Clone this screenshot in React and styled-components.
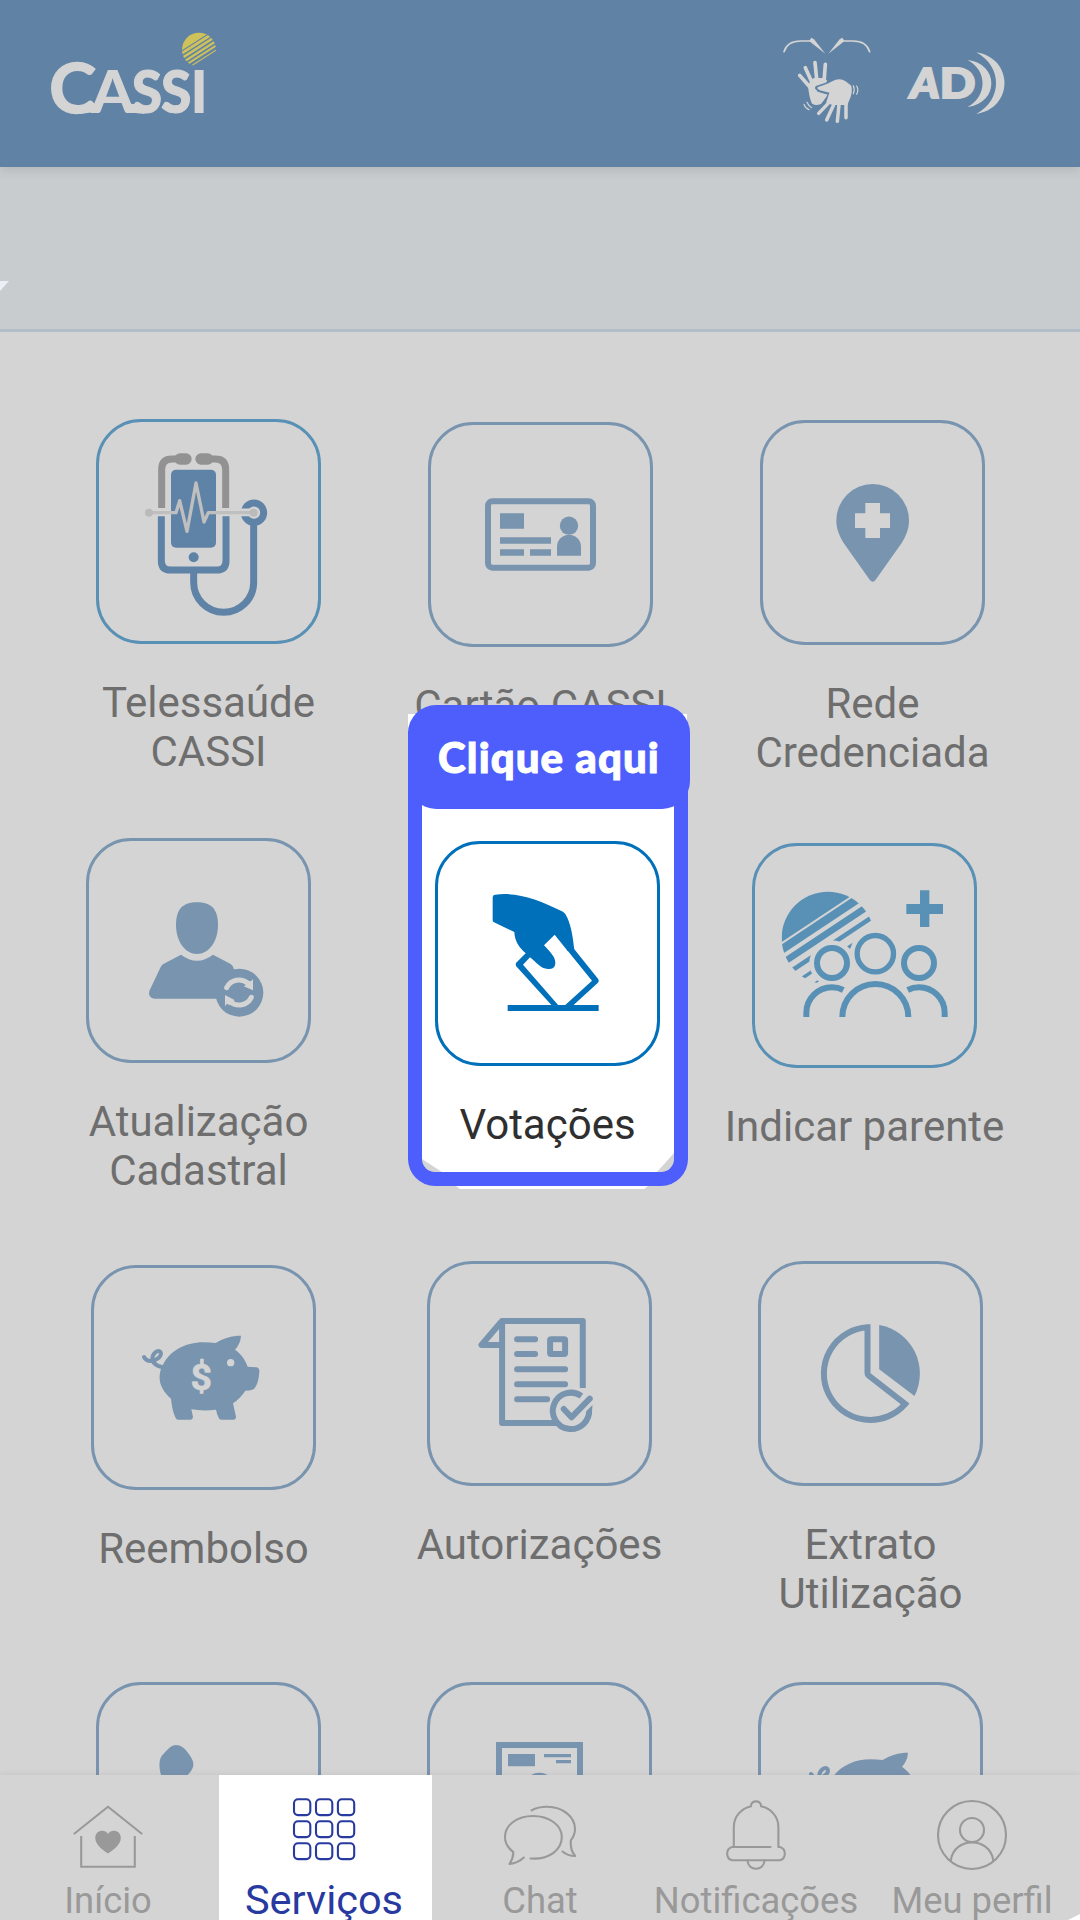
import React from "react";
import styled, { createGlobalStyle } from "styled-components";

const color = {
  page: "#d4d4d4",
  header: "#6083a5",
  banner: "#c8cccf",
  line: "#b2bec8",
  steel: "#7994af",
  sky: "#5990b5",
  phone: "#5f83a7",
  brand: "#0070ba",
  spot: "#4d5efc",
  label: "#6e6e6e",
  nav: "#999999",
  navActive: "#283a9f",
};

const GlobalStyle = createGlobalStyle`
  * { box-sizing: border-box; }
  body { margin: 0; background: ${color.page}; }
  svg { display: block; overflow: visible; }
`;

const Screen = styled.div`
  width: 1080px;
  height: 1920px;
  overflow: hidden;
  display: flex;
  flex-direction: column;
  background: ${color.page};
  font-family: Roboto, "Liberation Sans", sans-serif;
`;

const Header = styled.header`
  position: relative;
  z-index: 1;
  flex: 0 0 167px;
  display: flex;
  align-items: flex-start;
  padding: 32px 73px 0 50px;
  background: ${color.header};
  box-shadow: 0 3px 10px rgba(60, 60, 60, 0.14);
`;

const Access = styled.div`
  display: flex;
  align-items: flex-start;
  gap: 31px;
  margin-left: auto;
  padding-top: 3px;
`;

const AudioMark = styled.div`
  margin-top: 15px;
`;

const Banner = styled.section`
  position: relative;
  flex: 0 0 165px;
  background: ${color.banner};
  border-bottom: 3px solid ${color.line};
`;

const BannerNotch = styled.span`
  position: absolute;
  left: 0;
  top: 114px;
  width: 9px;
  height: 10px;
  background: #eaf0f5;
  clip-path: polygon(0 0, 100% 0, 0 100%);
`;

const Services = styled.main`
  flex: 1 1 0;
  min-height: 0;
  overflow: hidden;
  display: grid;
  grid-template-columns: repeat(3, 331px);
  grid-template-rows: 419px 423px 421px 300px;
  column-gap: 1px;
  padding: 87px 0 0 43px;
`;

const Service = styled.div`
  position: relative;
  display: flex;
  flex-direction: column;
  align-items: center;
  gap: 34px;
  margin: ${(p) => p.$dy || 0}px ${(p) => -(p.$dx || 0)}px 0 ${(p) => p.$dx || 0}px;
  z-index: ${(p) => (p.$lit ? 2 : 0)};
`;

const Tile = styled.div`
  position: relative;
  flex: none;
  width: 225px;
  height: 225px;
  border: 3px solid ${(p) => p.$stroke};
  border-radius: 45px;
`;

const Label = styled.div`
  position: relative;
  font-size: 42px;
  line-height: 49px;
  text-align: center;
  white-space: pre-line;
  color: ${(p) => (p.$lit ? "#2f2f2f" : color.label)};
`;

const SpotBack = styled.span`
  position: absolute;
  left: 26px;
  top: -127px;
  width: 279px;
  height: 475px;
  background: #fff;
  clip-path: polygon(0 0, 100% 0, 100% 425px, 266px 439px, 249px 458px, 239px 473px, 236px 475px, 52px 475px, 48px 472px, 34px 458px, 14px 445px, 0 437px);
`;

const SpotFrame = styled.span`
  position: absolute;
  left: 26px;
  top: -110px;
  width: 280px;
  height: 455px;
  border: 14px solid ${color.spot};
  border-top: 0;
  border-radius: 0 0 27px 27px;
`;

const SpotBadge = styled.span`
  position: absolute;
  left: 26px;
  top: -136px;
  width: 282px;
  height: 104px;
  border-radius: 28px;
  background: ${color.spot};
  color: #fff;
  font: 900 42px/104px Lato, "Open Sans", sans-serif;
  letter-spacing: 1.1px;
  -webkit-text-stroke: 1px #fff;
  text-align: center;
  white-space: nowrap;
`;

const NavBar = styled.nav`
  position: relative;
  flex: 0 0 145px;
  height: 145px;
  min-height: 0;
  display: grid;
  grid-template-columns: repeat(5, 216px);
  grid-template-rows: 145px;
  background: ${color.page};
  box-shadow: 0 -1px 5px rgba(90, 90, 90, 0.1);
`;

const NavItem = styled.div`
  display: flex;
  flex-direction: column;
  align-items: center;
  gap: 8px;
  padding-top: 21px;
  color: ${(p) => (p.$active ? color.navActive : color.nav)};
  background: ${(p) => (p.$active ? "linear-gradient(to right, transparent 3px, #fff 3px)" : "none")};
`;

const NavLabel = styled.span`
  font-size: ${(p) => (p.$active ? 41.5 : 36.4)}px;
  line-height: ${(p) => (p.$active ? 36 : 38)}px;
  white-space: nowrap;
`;

const NavCorner = styled.span`
  position: absolute;
  right: 0;
  bottom: 0;
  width: 12px;
  height: 6px;
  background: #fff;
  clip-path: polygon(100% 0, 100% 100%, 0 100%);
`;

/* Icons are drawn on a 3x grid; x and y are the tile's outer corner on it. */
const TileArt = ({ x, y, children, ...rest }) => (
  <svg width="219" height="219" viewBox={`${x + 9} ${y + 9} 657 657`} {...rest}>
    {children}
  </svg>
);

const TeleArt = () => (
  <TileArt x={48} y={57} fill="none">
    <g stroke="#929292" strokeWidth="21">
      <path d="M245 324V208Q245 177 276 177H300M437 324V208Q437 177 406 177H382" />
      <path d="M300 177H318M363 177H383" strokeWidth="34" strokeLinecap="round" />
    </g>
    <rect x="273" y="209" width="135" height="234" rx="15" fill={color.phone} />
    <g stroke={color.phone} strokeWidth="21">
      <path d="M244 348V482Q244 510 272 510H410Q438 510 438 482V348" />
      <path d="M341 515V547a90 90 0 0 0 180 0V370" />
      <circle cx="522" cy="338" r="29" />
    </g>
    <circle cx="341" cy="472" r="15" fill={color.phone} />
    <path d="M222 337H262M420 337H520" stroke={color.page} strokeWidth="23" />
    <path d="M207 338H288L299 302L321 394L348 249L372 366L385 338H521" stroke="#bfbfbf" strokeWidth="10" strokeLinejoin="round" />
    <circle cx="207" cy="338" r="12" fill="#bababa" />
    <circle cx="521" cy="338" r="12" fill="#bababa" />
  </TileArt>
);

const CardArt = () => (
  <TileArt x={84} y={66} fill={color.steel}>
    <rect x="264" y="304" width="315" height="199" rx="13" fill="none" stroke={color.steel} strokeWidth="18" />
    <path d="M300 340h72v46h-72zM300 412h153v19H300zM300 448h72v19h-72zM390 448h63v19h-63z" />
    <circle cx="507" cy="377" r="27.5" />
    <path d="M471 467V440a36 36 0 0 1 72 0V467z" />
  </TileArt>
);

const PinArt = () => (
  <TileArt x={120} y={60} fill={color.steel}>
    <path d="M349 361a109 109 0 0 1 218 0c0 28-10 48-22 68L467 539q-9 12-18 0L371 429c-12-20-22-40-22-68z" />
    <path d="M436 309h44v31h30v44h-30v30h-44v-30h-31v-44h31z" fill={color.page} />
  </TileArt>
);

const UpdateArt = () => (
  <TileArt x={48} y={54} fill={color.steel}>
    <path d="M381 247c42 0 63 20 63 68c0 50-28 87-63 87s-63-37-63-87c0-48 21-68 63-68z" />
    <path d="M333 404Q381 440 429 404L482 432Q490 437 492 448V536H254Q233 534 238 513L272 441Q275 435 280 432Z" />
    <circle cx="508" cy="518" r="72" />
    <g fill="none" stroke={color.page} strokeWidth="15" strokeLinecap="round">
      <path d="M470 503A41 41 0 0 1 534 490M544 532A41 41 0 0 1 480 545" />
    </g>
    <path d="M549 477V511L521 499L529 494L535 482L543 484ZM465 525V559L471 551L479 556L485 545L495 541Z" fill={color.page} />
  </TileArt>
);

const VoteArt = () => (
  <TileArt x={106} y={153} fill={color.brand}>
    <path d="M378 490L351 517Q345 523 351 530L460 650H516L594 579Q600 573 595 566L524 478Z" />
    <path d="M465 434L577 572L496 646H476L370 524L391 502L433 466Z" fill="#fff" />
    <path d="M279 321Q280 314 287 314C355 306 415 328 490 365Q497 369 503 383C516 412 520 445 524 480L504 483L465 434L433 466L391 502L378 490C355 470 345 450 344 426L283 397Q279 395 279 391Z" />
    <path d="M433 466C455 490 467 502 467 518C467 533 458 537 445 537C422 537 408 514 391 502L378 480L400 440Z" />
    <rect x="324" y="645" width="273" height="18" />
  </TileArt>
);

const Stripes = ({ cx, cy, r, cap, bands, fill, id, skew }) => (
  <g clipPath={`url(#${id})`} fill={fill}>
    <clipPath id={id}>
      <circle cx={cx} cy={cy} r={r} />
    </clipPath>
    <g transform={`translate(${cx} ${cy}) skewY(${skew})`}>
      <rect x={-r} y={-2.5 * r} width={2 * r} height={cap - cy + 2.5 * r} />
      {bands.map(([a, b]) => (
        <rect key={a} x={-r} y={a - cy} width={2 * r} height={b - a} />
      ))}
    </g>
  </g>
);

const ReferArt = () => (
  <TileArt x={126} y={69} fill={color.sky}>
    <Stripes
      id="sun-refer" cx={354} cy={354} r={139} cap={274} skew={-33.6} fill={color.sky}
      bands={[[281, 311], [326, 350], [371, 388], [417, 429], [460, 466]]}
    />
    <g fill={color.page}>
      <circle cx="366" cy="429" r="68" />
      <circle cx="496" cy="401" r="76" />
      <circle cx="366" cy="580" r="98" />
    </g>
    <g fill="none" stroke={color.sky} strokeWidth="18">
      <circle cx="366" cy="429" r="45" />
      <circle cx="627" cy="429" r="45" />
      <circle cx="496" cy="401" r="54.5" strokeWidth="16" />
      <path d="M397 591A99 99 0 0 1 595 591" />
      <path d="M289 591V578A77 77 0 0 1 366 502Q384 502 400 510M704 591V578A77 77 0 0 0 627 502Q609 502 593 510" />
    </g>
    <path d="M630 211h28v41h41v30h-41v39h-28v-39h-41v-30h41z" />
  </TileArt>
);

const PigArt = () => (
  <TileArt x={33} y={75} fill={color.steel}>
    <path d="M247 380C264 335 315 307 370 307Q390 307 407 309C428 295 455 287 483 287Q482 310 465 329C485 343 496 360 503 380L530 382Q538 384 538 394C537 420 530 445 517 449Q508 452 496 452Q482 474 459 490L468 530Q468 539 460 539H424Q418 539 416 533Q410 520 408 509Q370 514 334 508L339 530Q338 539 331 539H294Q288 539 286 532C278 515 275 495 273 476C242 448 232 420 243 386Z" />
    <path d="M192 351Q200 366 220 362Q243 354 243 340Q241 331 231 334C217 341 213 358 221 368Q230 378 246 381" fill="none" stroke={color.steel} strokeWidth="12" strokeLinecap="round" />
    <circle cx="452" cy="368" r="11" fill={color.page} />
    <text x="364" y="449" textAnchor="middle" fontSize="112" fontWeight="700" fontFamily="Roboto, sans-serif" fill={color.page} stroke={color.page} strokeWidth="2">$</text>
  </TileArt>
);

const AuthArt = () => (
  <TileArt x={80.7} y={63} fill="none" stroke={color.steel} strokeWidth="18" strokeLinejoin="round">
    <path d="M548 444V243H306V549H472M303 246L244 315H306" />
    <path d="M351 298H405M351 342H405M351 388H495M351 433H495M351 478H441" strokeLinecap="round" />
    <rect x="450" y="298" width="45" height="44" rx="3" />
    <path d="M568 496A56 56 0 0 1 567 508A54.5 54.5 0 1 1 544 468" />
    <path d="M491 507L514 532L569 476" stroke={color.page} strokeWidth="38" strokeLinecap="butt" />
    <path d="M491 507L514 532L569 476" strokeLinecap="round" />
  </TileArt>
);

const PieArt = () => (
  <TileArt x={1073.5} y={63} fill={color.steel}>
    <path d="M1402 262V400Q1402 404 1405 406L1515 492A139 139 0 1 1 1402 262Z" fill="none" stroke={color.steel} strokeWidth="18" />
    <path d="M1437 255V388L1543 468A148 148 0 0 0 1437 255Z" />
  </TileArt>
);

const PersonArt = () => (
  <TileArt x={0} y={0} fill={color.steel}>
    <path d="M197 222C214 203 226 189 240 189C258 189 271 203 285 226C297 246 294 260 275 279L250 300H205L195 279C189 258 188 236 197 222Z" />
  </TileArt>
);

const CertificateArt = () => (
  <TileArt x={0} y={0} fill={color.steel}>
    <path d="M216 340V189H459V340" fill="none" stroke={color.steel} strokeWidth="18" />
    <path d="M243 216h81v37h-81zM351 216h81v10h-81zM387 234h45v10h-45z" />
    <circle cx="337" cy="318" r="46" />
  </TileArt>
);

const CassiLogo = () => (
  <svg width="168" height="84" viewBox="150 96 504 252" fill={color.page} fontFamily="Lato, sans-serif" fontWeight="900">
    <text x="147" y="339" fontSize="208" fontWeight="700" stroke={color.page} strokeWidth="4" textLength="142" lengthAdjust="spacingAndGlyphs">C</text>
    <path d="M232 319Q256 319 276 312L298 331Q270 341 232 342Z" />
    <text x="273" y="338" fontSize="176" textLength="130" lengthAdjust="spacingAndGlyphs">A</text>
    <path d="M372 310L400 312Q415 320 434 320V342Q405 340 376 332Z" />
    <g stroke={color.page} strokeWidth="3">
      <text x="395" y="338" fontSize="176" textLength="91" lengthAdjust="spacingAndGlyphs">S</text>
      <text x="483" y="338" fontSize="176" textLength="91" lengthAdjust="spacingAndGlyphs">S</text>
    </g>
    <text x="571" y="339" fontSize="176">I</text>
    <Stripes
      id="sun-logo" cx={597} cy={149} r={51} cap={118} skew={-32.6} fill="#d0c25a"
      bands={[[122, 132], [137, 146], [152, 160], [166, 173], [181, 185]]}
    />
  </svg>
);

const LibrasIcon = () => (
  <svg width="94" height="91" viewBox="120 105 282 273" fill={color.page}>
    <g fill="none" stroke={color.page} strokeWidth="5" strokeLinecap="round">
      <path d="M132 155Q142 123 182 123H212M389 155Q379 123 339 123H309" />
      <g strokeWidth="3.5">
        <path d="M340 257Q345 268 340 281M350 258Q357 270 350 283M192 313Q196 325 207 329M201 307Q206 319 215 323" />
      </g>
    </g>
    <path d="M208 122L214 113L222 118L256 161L214 128ZM313 122L307 113L299 118L265 161L307 128Z" />
    <g stroke={color.page} strokeLinecap="round" strokeLinejoin="round">
      <path d="M179 226L212 264M196 203L218 252M225 188L231 246M256 193L252 246" strokeWidth="11" />
      <path d="M208 256L222 238L252 238L257 243L228 258Q224 274 232 280L262 280L241 308Q228 314 219 308Q211 290 208 256Z" strokeWidth="8" />
    </g>
    <path d="M232 264L268 252L286 243Q302 237 315 246L330 259L320 312H274L252 318L268 290L268 278L240 270Z" stroke={color.header} strokeWidth="14" strokeLinejoin="round" />
    <path d="M235 264Q250 260 268 252L286 243Q302 237 315 246L331 259Q335 272 329 290L320 312H278L262 306L272 276L240 268Z" stroke={color.page} strokeWidth="6" strokeLinejoin="round" />
    <path d="M236 340L276 298M260 360L286 304M292 364L298 304M318 353L318 298" stroke={color.page} strokeWidth="10.5" strokeLinecap="round" />
  </svg>
);

const AudioIcon = () => (
  <svg width="102" height="65" viewBox="495 150 306 195" fill={color.page} fontFamily="Lato, sans-serif" fontWeight="900">
    <g stroke={color.page} strokeWidth="6">
      <text x="511" y="295" fontSize="124" fontStyle="italic" textLength="88" lengthAdjust="spacingAndGlyphs">A</text>
      <text x="599" y="295" fontSize="124" textLength="107" lengthAdjust="spacingAndGlyphs">D</text>
    </g>
    <path d="M682 180C778 190 778 310 682 321C743 290 743 210 682 180Z" />
    <path d="M709 157C822 175 822 325 709 342C788 300 788 200 709 157Z" />
  </svg>
);

const NavArt = ({ cx, children }) => (
  <svg width="78" height="78" viewBox={`${cx - 39} 1796 78 78`} fill="none" stroke="currentColor" strokeWidth="2.1" strokeLinecap="round" strokeLinejoin="round">
    {children}
  </svg>
);

const HomeIcon = () => (
  <NavArt cx={108}>
    <path d="M74.5 1833.5L108 1806.7L141.5 1833.5" />
    <path d="M81.2 1836V1866.7H134.8V1836" strokeLinecap="butt" strokeLinejoin="miter" />
    <path d="M108 1853.5C101 1849 95.3 1844 95.3 1838C95.3 1830 105 1828.5 108 1834C111 1828.5 120.8 1830 120.8 1838C120.8 1844 115 1849 108 1853.5Z" fill="currentColor" stroke="none" />
  </NavArt>
);

const GridIcon = () => (
  <NavArt cx={324}>
    {[1799.3, 1821.3, 1843.3].map((y) =>
      [294, 316, 337.9].map((x) => <rect key={`${x}-${y}`} x={x} y={y} width="16.3" height="15.8" rx="4" />)
    )}
  </NavArt>
);

const ChatIcon = () => (
  <NavArt cx={540}>
    <path d="M530.5 1858.5C550 1860 561.8 1849 561.8 1837C561.8 1825 549 1816 533 1816C517 1816 505 1825 505 1837C505 1843 508 1848 513.3 1852Q513.5 1858 509.5 1864Q518 1863 523.8 1857.5" />
    <path d="M531.5 1810.3Q538 1806.7 547 1806.7C563 1806.7 575 1817 575 1829Q575 1835 570.8 1840.5Q570 1850 575.2 1856Q567.5 1856 562.5 1851.5" />
  </NavArt>
);

const BellIcon = () => (
  <NavArt cx={756}>
    <path d="M770.5 1847H732A7 7 0 0 0 732 1860.3H780A7 7 0 0 0 780 1847H778.4V1827C778.4 1816 770.5 1808.5 761 1806.2C761.5 1799.8 750.5 1799.8 751 1806.2C741.5 1808.5 733.8 1816 733.8 1827V1847" />
    <path d="M747.5 1860.5C748 1871.5 764 1871.5 764.5 1860.5" />
  </NavArt>
);

const ProfileIcon = () => (
  <NavArt cx={972}>
    <circle cx="972" cy="1835" r="34" />
    <circle cx="972" cy="1830" r="12" />
    <path d="M950.8 1860.5C954 1836.3 990 1836.3 993.3 1860.5" />
  </NavArt>
);

const services = [
  { label: "Telessaúde\nCASSI", Art: TeleArt, stroke: color.sky },
  { label: "Cartão CASSI", Art: CardArt, dy: 3 },
  { label: "Rede\nCredenciada", Art: PinArt, dy: 1 },
  { label: "Atualização\nCadastral", Art: UpdateArt, dx: -10 },
  { label: "Votações", Art: VoteArt, stroke: color.brand, dx: 7, dy: 3, lit: true },
  { label: "Indicar parente", Art: ReferArt, stroke: color.sky, dx: -8, dy: 5 },
  { label: "Reembolso", Art: PigArt, dx: -5, dy: 4 },
  { label: "Autorizações", Art: AuthArt, dx: -1 },
  { label: "Extrato\nUtilização", Art: PieArt, dx: -2 },
  { label: "", Art: PersonArt },
  { label: "", Art: CertificateArt, dx: -1 },
  { label: "", Art: PigArt, dx: -2 },
];

const tabs = [
  { label: "Início", Icon: HomeIcon },
  { label: "Serviços", Icon: GridIcon, active: true },
  { label: "Chat", Icon: ChatIcon },
  { label: "Notificações", Icon: BellIcon },
  { label: "Meu perfil", Icon: ProfileIcon },
];

export default function App() {
  return (
    <Screen>
      <GlobalStyle />
      <Header>
        <CassiLogo />
        <Access>
          <LibrasIcon />
          <AudioMark>
            <AudioIcon />
          </AudioMark>
        </Access>
      </Header>
      <Banner>
        <BannerNotch />
      </Banner>
      <Services>
        {services.map(({ label, Art, stroke, dx, dy, lit }, i) => (
          <Service key={i} $dx={dx} $dy={dy} $lit={lit}>
            {lit && (
              <>
                <SpotBack />
                <SpotFrame />
                <SpotBadge>Clique aqui</SpotBadge>
              </>
            )}
            <Tile $stroke={stroke || color.steel}>
              <Art />
            </Tile>
            {label && <Label $lit={lit}>{label}</Label>}
          </Service>
        ))}
      </Services>
      <NavBar>
        {tabs.map(({ label, Icon, active }) => (
          <NavItem key={label} $active={active}>
            <Icon />
            <NavLabel $active={active}>{label}</NavLabel>
          </NavItem>
        ))}
        <NavCorner />
      </NavBar>
    </Screen>
  );
}
